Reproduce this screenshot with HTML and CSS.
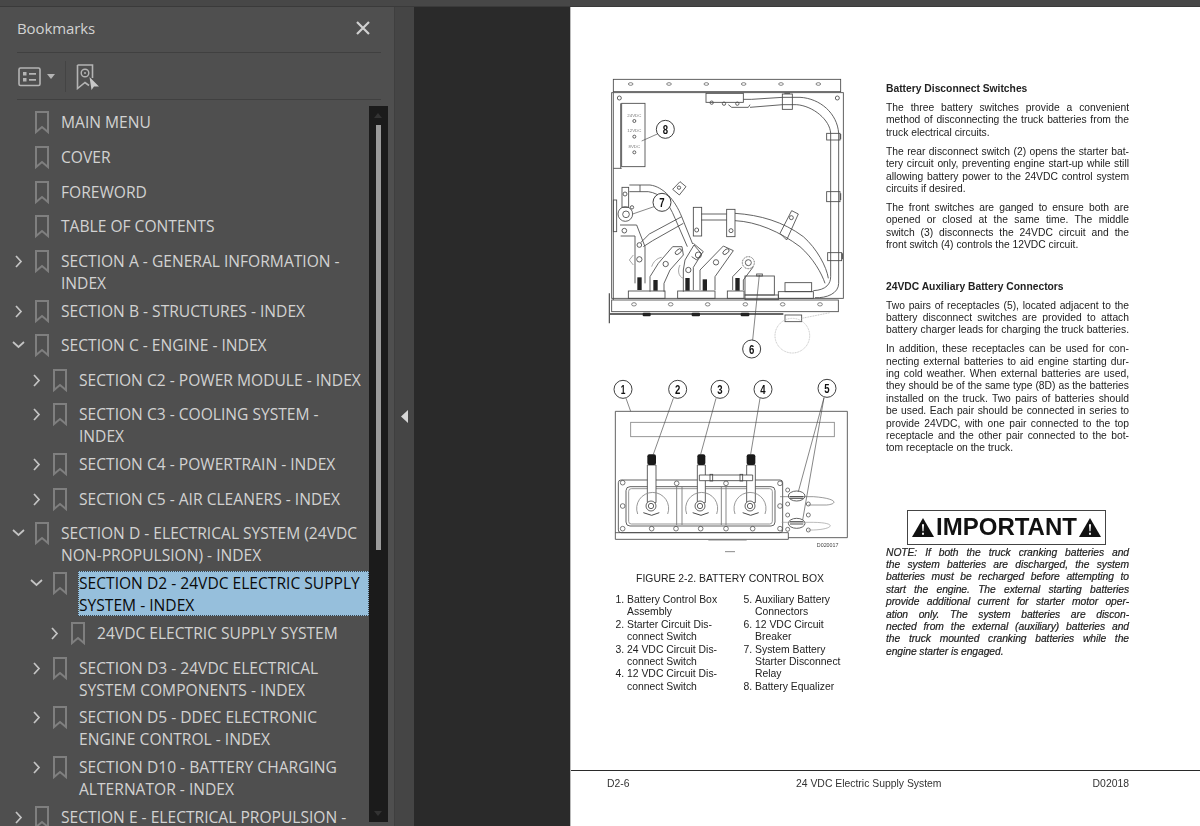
FILE: index.html
```html
<!DOCTYPE html>
<html lang="en">
<head>
<meta charset="utf-8">
<title>Bookmarks</title>
<link rel="stylesheet" href="styles.css">
</head>
<body>
<svg class="defs" width="0" height="0" aria-hidden="true"><defs>
<g id="bm"><path d="M1 1H13V21L7 16L1 21Z" fill="none" stroke="#7f7f7f" stroke-width="2"/></g>
<g id="cr"><path d="M1 1L6 6.5L1 12" fill="none" stroke="#c4c4c4" stroke-width="1.7"/></g>
<g id="cd"><path d="M1 1L6.5 6L12 1" fill="none" stroke="#c4c4c4" stroke-width="1.7"/></g>
</defs></svg>
<div class="app">
  <div class="topbar"></div>
  <div class="main">
    <aside class="panel">
      <header class="panel-head"><span class="panel-title">Bookmarks</span>
        <svg class="close" width="16" height="16" viewBox="0 0 16 16"><path d="M2 2L14 14M14 2L2 14" stroke="#d0d0d0" stroke-width="2.2" fill="none"/></svg>
      </header>
      <div class="tools">
        <svg class="tool-list" width="24" height="20" viewBox="0 0 24 20"><rect x="1" y="1" width="21" height="17.5" rx="1.5" fill="none" stroke="#b4b4b4" stroke-width="1.6"/><rect x="5" y="5" width="3.5" height="3.5" fill="#b4b4b4"/><rect x="5" y="11" width="3.5" height="3.5" fill="#b4b4b4"/><path d="M11 6.8H18M11 12.8H18" stroke="#b4b4b4" stroke-width="1.8"/></svg>
        <svg class="tool-caret" width="8" height="5" viewBox="0 0 8 5"><path d="M0 0H8L4 5Z" fill="#b4b4b4"/></svg>
        <span class="tool-sep"></span>
        <svg class="tool-find" width="24" height="26" viewBox="0 0 24 26"><path d="M1.5 1H16.5V14M1.5 1V24.5L9 18.5L13 21.5" fill="none" stroke="#b4b4b4" stroke-width="1.6"/><circle cx="9" cy="9" r="3.8" fill="none" stroke="#b4b4b4" stroke-width="1.4"/><circle cx="9" cy="9" r="1" fill="#b4b4b4"/><path d="M13.5 13L23 22.5H18L15.5 26Z" fill="#c8c8c8"/></svg>
      </div>
      <div class="tree-wrap">
        <ul class="tree">
          <li class="row l0"><span class="tw"></span><svg class="bm"><use href="#bm"/></svg><span class="lab">MAIN MENU</span></li>
          <li class="row l0"><span class="tw"></span><svg class="bm"><use href="#bm"/></svg><span class="lab">COVER</span></li>
          <li class="row l0"><span class="tw"></span><svg class="bm"><use href="#bm"/></svg><span class="lab">FOREWORD</span></li>
          <li class="row l0"><span class="tw"></span><svg class="bm"><use href="#bm"/></svg><span class="lab">TABLE OF CONTENTS</span></li>
          <li class="row l0 two"><svg class="tw"><use href="#cr"/></svg><svg class="bm"><use href="#bm"/></svg><span class="lab">SECTION A - GENERAL INFORMATION -<br>INDEX</span></li>
          <li class="row l0"><svg class="tw"><use href="#cr"/></svg><svg class="bm"><use href="#bm"/></svg><span class="lab">SECTION B - STRUCTURES - INDEX</span></li>
          <li class="row l0"><svg class="tw down"><use href="#cd"/></svg><svg class="bm"><use href="#bm"/></svg><span class="lab">SECTION C - ENGINE - INDEX</span></li>
          <li class="row l1"><svg class="tw"><use href="#cr"/></svg><svg class="bm"><use href="#bm"/></svg><span class="lab">SECTION C2 - POWER MODULE - INDEX</span></li>
          <li class="row l1 two"><svg class="tw"><use href="#cr"/></svg><svg class="bm"><use href="#bm"/></svg><span class="lab">SECTION C3 - COOLING SYSTEM -<br>INDEX</span></li>
          <li class="row l1"><svg class="tw"><use href="#cr"/></svg><svg class="bm"><use href="#bm"/></svg><span class="lab">SECTION C4 - POWERTRAIN - INDEX</span></li>
          <li class="row l1"><svg class="tw"><use href="#cr"/></svg><svg class="bm"><use href="#bm"/></svg><span class="lab">SECTION C5 - AIR CLEANERS - INDEX</span></li>
          <li class="row l0 two"><svg class="tw down"><use href="#cd"/></svg><svg class="bm"><use href="#bm"/></svg><span class="lab">SECTION D - ELECTRICAL SYSTEM (24VDC<br>NON-PROPULSION) - INDEX</span></li>
          <li class="row l1 two"><svg class="tw down"><use href="#cd"/></svg><svg class="bm"><use href="#bm"/></svg><span class="lab selected">SECTION D2 - 24VDC ELECTRIC SUPPLY<br>SYSTEM - INDEX</span></li>
          <li class="row l2"><svg class="tw"><use href="#cr"/></svg><svg class="bm"><use href="#bm"/></svg><span class="lab">24VDC ELECTRIC SUPPLY SYSTEM</span></li>
          <li class="row l1 two"><svg class="tw"><use href="#cr"/></svg><svg class="bm"><use href="#bm"/></svg><span class="lab">SECTION D3 - 24VDC ELECTRICAL<br>SYSTEM COMPONENTS - INDEX</span></li>
          <li class="row l1 two"><svg class="tw"><use href="#cr"/></svg><svg class="bm"><use href="#bm"/></svg><span class="lab">SECTION D5 - DDEC ELECTRONIC<br>ENGINE CONTROL - INDEX</span></li>
          <li class="row l1 two"><svg class="tw"><use href="#cr"/></svg><svg class="bm"><use href="#bm"/></svg><span class="lab">SECTION D10 - BATTERY CHARGING<br>ALTERNATOR - INDEX</span></li>
          <li class="row l0 two"><svg class="tw"><use href="#cr"/></svg><svg class="bm"><use href="#bm"/></svg><span class="lab">SECTION E - ELECTRICAL PROPULSION -</span></li>
        </ul>
        <div class="scrollbar"><span class="arrow up"></span><span class="thumb"></span><span class="arrow dn"></span></div>
      </div>
    </aside>
    <div class="handle-strip"><svg width="7" height="13" viewBox="0 0 7 13"><path d="M7 0V13L0 6.5Z" fill="#d6d6d6"/></svg></div>
    <div class="gutter"></div>
    <main class="page">
      <div class="columns">
        <section class="col-left">
          <svg class="fig" width="270" height="300" viewBox="0 0 810 900">
            <g fill="none" stroke="#4a4a4a" stroke-width="2.6">
              <rect x="40" y="28" width="682" height="37"/>
              <rect x="35" y="68" width="695" height="617"/>
              <path d="M40 68V690M62 100V295M40 295H65"/>
              <rect x="65" y="100" width="70" height="190"/>
              <circle cx="58" cy="84" r="6"/><circle cx="712" cy="84" r="6"/>
              <g stroke-width="2"><ellipse cx="92" cy="42" rx="7" ry="4"/><ellipse cx="207" cy="42" rx="7" ry="4"/><ellipse cx="319" cy="42" rx="7" ry="4"/><ellipse cx="431" cy="42" rx="7" ry="4"/><ellipse cx="543" cy="42" rx="7" ry="4"/><ellipse cx="655" cy="42" rx="7" ry="4"/>
              <ellipse cx="102" cy="703" rx="7" ry="5"/><ellipse cx="212" cy="703" rx="7" ry="5"/><ellipse cx="323" cy="703" rx="7" ry="5"/><ellipse cx="436" cy="703" rx="7" ry="5"/><ellipse cx="548" cy="703" rx="7" ry="5"/><ellipse cx="660" cy="703" rx="7" ry="5"/></g>
              <circle cx="103" cy="153" r="4.5"/><circle cx="103" cy="200" r="4.5"/><circle cx="103" cy="247" r="4.5"/>
              <path d="M172 192L125 213M162 410L98 432M458 810L478 615" stroke-width="2"/>
              <rect x="318" y="70" width="112" height="27"/>
              <circle cx="335" cy="98" r="5"/><circle cx="372" cy="101" r="5"/><circle cx="412" cy="101" r="5"/>
              <path d="M385 104L395 112H445L450 104"/>
              <path d="M430 88H455L548 82H600C660 85 712 130 716 190V640C716 670 680 685 645 683"/>
              <path d="M450 112L548 104H590C640 108 690 150 692 190V620C692 640 680 660 640 662"/>
              <rect x="547" y="72" width="30" height="46"/><rect x="680" y="190" width="40" height="20"/><rect x="680" y="365" width="40" height="30"/><rect x="683" y="548" width="42" height="24"/>
              <g stroke-width="3.2"><path d="M722 192V208M722 370V390M727 550V568M553 70H570"/></g>
              <rect x="40" y="390" width="10" height="95"/>
              <circle cx="76" cy="432" r="22"/><circle cx="78" cy="433" r="10"/>
              <rect x="66" y="352" width="20" height="60"/>
              <circle cx="75" cy="372" r="6"/><circle cx="96" cy="412" r="5"/><circle cx="73" cy="482" r="7"/>
              <path d="M60 465H110L135 530V640M62 498H105V640"/>
              <circle cx="118" cy="568" r="8"/><circle cx="118" cy="525" r="7"/>
              <path d="M88 345H150C190 350 225 390 245 440L278 522M88 365H145C180 370 205 395 225 445L262 530"/>
              <path d="M120 345V365"/>
              <path d="M218 358L240 335L258 350L238 375Z"/><circle cx="237" cy="353" r="5"/>
              <path d="M148 492L245 440M158 512L250 460M122 518L148 492M130 530L158 512"/>
              <circle cx="295" cy="555" r="9"/><path d="M280 520L310 545L290 570L275 560"/>
              <path d="M150 665V620L175 580L218 530H246L250 555L210 600L192 640V665"/>
              <ellipse cx="235" cy="545" rx="11" ry="6" transform="rotate(-40 235 545)"/><circle cx="197" cy="582" r="8"/>
              <path d="M250 665V600L255 570L282 525L305 552L280 592V660"/><circle cx="265" cy="600" r="8"/>
              <path d="M300 660V600L370 528L400 542L345 620V660"/><ellipse cx="378" cy="545" rx="11" ry="6" transform="rotate(-40 378 545)"/><circle cx="348" cy="577" r="8"/>
              <path d="M398 660V620L425 592M460 590L430 630V660"/>
              <circle cx="445" cy="578" r="18" stroke-dasharray="3 2"/><circle cx="445" cy="578" r="9"/>
              <path d="M100 555L88 570L100 585M185 562C170 565 160 575 155 590M240 585C232 600 235 620 250 625" stroke="#999"/>
              <rect x="85" y="663" width="110" height="22"/><rect x="233" y="663" width="112" height="22"/><rect x="382" y="663" width="50" height="22"/>
              <rect x="435" y="618" width="88" height="57"/><rect x="470" y="612" width="17" height="6"/><rect x="435" y="675" width="100" height="14"/>
              <rect x="555" y="638" width="80" height="27"/><rect x="535" y="665" width="105" height="20"/>
              <path d="M304 432H380M304 450H380"/>
              <rect x="280" y="412" width="25" height="86"/><rect x="380" y="418" width="25" height="82"/>
              <circle cx="290" cy="480" r="6"/><circle cx="393" cy="482" r="6"/>
              <path d="M405 430C480 435 550 455 610 500C650 535 680 590 685 625M405 452C470 455 540 485 600 530C640 565 665 610 675 640"/>
              <path d="M540 490L575 422L595 432L560 510Z"/><circle cx="574" cy="443" r="6"/>
              <rect x="35" y="690" width="680" height="35"/>
              <path d="M28 670V760" stroke-width="3.5"/><path d="M30 732H550" stroke-width="5" stroke="#333"/>
              <rect x="555" y="735" width="50" height="20"/>
              <circle cx="577" cy="797" r="52" stroke="#bbb" stroke-dasharray="3 2"/><path d="M605 745L690 728" stroke="#bbb" stroke-dasharray="3 2"/>
            </g>
            <g fill="#222"><rect x="128" y="728" width="24" height="11" rx="3"/><rect x="275" y="728" width="25" height="11" rx="3"/><rect x="422" y="728" width="26" height="11" rx="3"/>
              <rect x="112" y="622" width="13" height="38"/><rect x="160" y="630" width="13" height="32"/><rect x="256" y="624" width="13" height="38"/><rect x="308" y="628" width="13" height="34"/><rect x="406" y="624" width="13" height="38"/></g>
            <g class="tiny"><text x="103" y="141">24VDC</text><text x="103" y="187">12VDC</text><text x="103" y="235">8VDC</text></g>
            <g class="call"><circle cx="196" cy="178" r="27"/><text x="196" y="192" textLength="16" lengthAdjust="spacingAndGlyphs">8</text><circle cx="186" cy="397" r="27"/><text x="186" y="411" textLength="16" lengthAdjust="spacingAndGlyphs">7</text><circle cx="455" cy="837" r="27"/><text x="455" y="851" textLength="16" lengthAdjust="spacingAndGlyphs">6</text></g>
          </svg>
          <svg class="fig" width="270" height="200" viewBox="0 0 810 600">
            <g fill="none" stroke="#4a4a4a" stroke-width="2.6">
              <path d="M46 124H742V503H565M46 124V508H565V488H46"/>
              <rect x="92" y="157" width="611" height="43" stroke="#888"/>
              <path d="M78 85L92 124M220 85L160 253M348 85L302 253M480 85L452 253M672 83L595 365M672 83L608 450" stroke-width="2"/>
              <rect x="55" y="330" width="493" height="158" rx="8"/>
              <rect x="78" y="350" width="447" height="118" rx="12"/>
              <rect x="86" y="356" width="431" height="106" rx="8" stroke="#888"/>
              <path d="M230 350V465M246 350V465M364 350V465M378 350V465" stroke="#777"/>
              <path d="M142 285H168V398H142ZM292 285H316V398H292ZM440 285H466V398H440Z" fill="#fff"/>
              <path d="M298 315H458V332H298Z" fill="#fff"/>
              <rect x="330" y="313" width="8" height="20"/><rect x="420" y="313" width="8" height="20"/>
              <path d="M113 432A48 48 0 1 1 203 432M260 432A48 48 0 1 1 350 432M405 432A48 48 0 1 1 495 432" stroke="#888"/>
              <path d="M130 428L155 436L178 428M278 428L303 436L326 428M428 428L452 436L476 428" stroke-width="3"/>
              <g fill="#fff"><circle cx="153" cy="408" r="15"/><circle cx="300" cy="408" r="15"/><circle cx="450" cy="408" r="15"/></g>
              <circle cx="153" cy="408" r="8"/><circle cx="300" cy="408" r="8"/><circle cx="450" cy="408" r="8"/>
              <g stroke-width="2.2"><circle cx="68" cy="338" r="7"/><circle cx="68" cy="408" r="7"/><circle cx="68" cy="476" r="7"/><circle cx="230" cy="340" r="7"/><circle cx="378" cy="340" r="7"/><circle cx="540" cy="340" r="7"/><circle cx="540" cy="408" r="7"/><circle cx="540" cy="476" r="7"/><circle cx="155" cy="476" r="7"/><circle cx="228" cy="476" r="7"/><circle cx="302" cy="476" r="7"/><circle cx="378" cy="476" r="7"/><circle cx="458" cy="476" r="7"/><circle cx="563" cy="360" r="6"/><circle cx="563" cy="402" r="6"/><circle cx="625" cy="402" r="6"/><circle cx="563" cy="435" r="6"/><circle cx="563" cy="478" r="6"/><circle cx="625" cy="435" r="6"/><circle cx="625" cy="480" r="6"/></g>
              <ellipse cx="590" cy="378" rx="25" ry="15"/><ellipse cx="590" cy="460" rx="25" ry="15"/>
              <path d="M540 380H640C712 385 715 402 680 405H625" stroke="#666" stroke-width="2"/>
              <path d="M545 457H640C715 458 700 478 640 480H625" stroke="#999" stroke-width="2"/>
              <path d="M570 380H610M570 385H610M570 455H610M570 462H610" stroke="#333"/>
              <path d="M325 510H440M375 545H405" stroke="#777"/>
            </g>
            <g fill="#1a1a1a"><rect x="142" y="253" width="26" height="32" rx="6"/><rect x="292" y="253" width="24" height="32" rx="6"/><rect x="440" y="253" width="26" height="32" rx="6"/></g>
            <g class="call"><circle cx="69" cy="58" r="27"/><text x="69" y="72" textLength="14" lengthAdjust="spacingAndGlyphs">1</text><circle cx="233" cy="58" r="27"/><text x="233" y="72" textLength="16" lengthAdjust="spacingAndGlyphs">2</text><circle cx="360" cy="58" r="27"/><text x="360" y="72" textLength="16" lengthAdjust="spacingAndGlyphs">3</text><circle cx="489" cy="58" r="27"/><text x="489" y="72" textLength="16" lengthAdjust="spacingAndGlyphs">4</text><circle cx="681" cy="55" r="27"/><text x="681" y="69" textLength="16" lengthAdjust="spacingAndGlyphs">5</text></g>
            <text class="figno" x="683" y="532">D020017</text>
          </svg>
          <p class="caption">FIGURE 2-2. BATTERY CONTROL BOX</p>
          <div class="legend">
            <ol class="leg-col">
              <li>Battery Control Box<br>Assembly</li>
              <li>Starter Circuit Dis-<br>connect Switch</li>
              <li>24 VDC Circuit Dis-<br>connect Switch</li>
              <li>12 VDC Circuit Dis-<br>connect Switch</li>
            </ol>
            <ol class="leg-col" start="5">
              <li>Auxiliary Battery<br>Connectors</li>
              <li>12 VDC Circuit<br>Breaker</li>
              <li>System Battery<br>Starter Disconnect<br>Relay</li>
              <li>Battery Equalizer</li>
            </ol>
          </div>
        </section>
        <section class="col-right">
          <h3>Battery Disconnect Switches</h3>
          <p><span class="j">The three battery switches provide a convenient</span><span class="j">method of disconnecting the truck batteries from the</span><span>truck electrical circuits.</span></p>
          <p><span class="j">The rear disconnect switch (2) opens the starter bat-</span><span class="j">tery circuit only, preventing engine start-up while still</span><span class="j">allowing battery power to the 24VDC control system</span><span>circuits if desired.</span></p>
          <p><span class="j">The front switches are ganged to ensure both are</span><span class="j">opened or closed at the same time. The middle</span><span class="j">switch (3) disconnects the 24VDC circuit and the</span><span>front switch (4) controls the 12VDC circuit.</span></p>
          <h3 class="h-second">24VDC Auxiliary Battery Connectors</h3>
          <p><span class="j">Two pairs of receptacles (5), located adjacent to the</span><span class="j">battery disconnect switches are provided to attach</span><span class="j">battery charger leads for charging the truck batteries.</span></p>
          <p><span class="j">In addition, these receptacles can be used for con-</span><span class="j">necting external batteries to aid engine starting dur-</span><span class="j">ing cold weather. When external batteries are used,</span><span class="j">they should be of the same type (8D) as the batteries</span><span class="j">installed on the truck. Two pairs of batteries should</span><span class="j">be used. Each pair should be connected in series to</span><span class="j">provide 24VDC, with one pair connected to the top</span><span class="j">receptacle and the other pair connected to the bot-</span><span>tom receptacle on the truck.</span></p>
          <div class="important"><svg width="22" height="19" viewBox="0 0 21 18"><path d="M10.5 0L21 18H0Z" fill="#111"/><path d="M9.5 6H11.5L11 12.5H10ZM9.6 14H11.4V16H9.6Z" fill="#fff"/></svg><span>IMPORTANT</span><svg width="22" height="19" viewBox="0 0 21 18"><path d="M10.5 0L21 18H0Z" fill="#111"/><path d="M9.5 6H11.5L11 12.5H10ZM9.6 14H11.4V16H9.6Z" fill="#fff"/></svg></div>
          <p class="note"><span class="j">NOTE: If both the truck cranking batteries and</span><span class="j">the system batteries are discharged, the system</span><span class="j">batteries must be recharged before attempting to</span><span class="j">start the engine. The external starting batteries</span><span class="j">provide additional current for starter motor oper-</span><span class="j">ation only. The system batteries are discon-</span><span class="j">nected from the external (auxiliary) batteries and</span><span class="j">the truck mounted cranking batteries while the</span><span>engine starter is engaged.</span></p>
        </section>
      </div>
      <footer class="foot"><span>D2-6</span><span>24 VDC Electric Supply System</span><span>D02018</span></footer>
    </main>
  </div>
</div>
</body>
</html>
```
FILE: styles.css
```css
*{box-sizing:border-box}
html,body{margin:0;height:100%;overflow:hidden}
.defs{position:absolute}
.app{width:1200px;height:826px;display:flex;flex-direction:column;background:#2a2a2a;overflow:hidden}
.topbar{height:7px;flex:none;background:#474747;border-bottom:1px solid #3a3a3a}
.main{flex:1;display:flex;min-height:0}
.panel{width:394px;flex:none;background:#4f4f4f;display:flex;flex-direction:column;font-family:"Open Sans","Noto Sans",sans-serif;color:#d2d2d2;overflow:hidden}
.panel-head{height:46px;margin:0 13px 0 17px;display:flex;align-items:center;justify-content:space-between;border-bottom:1px solid #404040;padding:0 10px 3px 0}
.panel-title{font-size:15px;color:#d2d2d2;letter-spacing:-.1px}
.tools{height:47px;margin:0 13px 0 17px;display:flex;align-items:center;border-bottom:1px solid #404040;padding:1px 0 0 1px}
.tool-caret{margin:0 0 0 5px}
.tool-sep{width:1px;height:31px;background:#444;margin:0 10px 0 10px}
.tree-wrap{flex:1;display:flex;min-height:0;padding-top:6px}
.tree{list-style:none;margin:0;padding:0;width:369px;flex:none}
.row{height:34.6px;padding-top:5.4px;display:flex;align-items:flex-start;font-size:15.6px;line-height:22px;white-space:nowrap}
.row.two{height:49.8px}
.l0{padding-left:15px}
.l1{padding-left:33px}
.l2{padding-left:51px}
.tw{width:7px;height:13px;flex:none;margin-top:5px;overflow:visible}
span.tw{display:block}
.tw.down{width:13px;margin-left:-3px;margin-top:7px;margin-right:-3px}
.bm{width:14px;height:22px;flex:none;margin:0 0 0 13px;overflow:visible}
.lab{margin-left:12px;flex:1}
.lab.selected{background:#96bfdc;color:#0a0a0a;outline:1px dotted #3a4650;outline-offset:-1px;margin:-1px 0 0 11px;padding:1px 0 0 1px;height:45px}
.scrollbar{width:18.5px;flex:none;height:716px;background:#1b1b1b;position:relative}
.thumb{position:absolute;left:7px;top:19px;width:5px;height:425px;background:#9a9a9a}
.arrow{position:absolute;left:5px;width:0;height:0;border-left:4px solid transparent;border-right:4px solid transparent}
.arrow.up{top:7px;border-bottom:5px solid #333}
.arrow.dn{bottom:6px;border-top:5px solid #333}
.handle-strip{width:20px;flex:none;background:#454545;border-left:1px solid #3f3f3f;display:flex;align-items:center;justify-content:center}
.gutter{width:156px;flex:none;background:#2a2a2a}
.page{flex:1;background:#fff;border-left:1px solid #bbb;position:relative;font-family:"Liberation Sans",Arial,sans-serif;color:#222;display:flex;flex-direction:column}
.columns{display:flex;height:763px;flex:none;filter:blur(.3px)}
.col-left{width:315px;flex:none;padding:63px 0 0 29px;display:flex;flex-direction:column}
.fig{display:block;flex:none}
.call circle{fill:#fff;stroke:#222;stroke-width:2.6}
.call text{font:700 40px "Liberation Sans",sans-serif;text-anchor:middle;fill:#111}
.tiny text{font:13px "Liberation Sans",sans-serif;text-anchor:middle;fill:#777}
.figno{font:16px "Liberation Sans",sans-serif;fill:#444;text-anchor:middle}
.caption{font-size:10.4px;line-height:12px;margin:3px 0 0;text-align:center;width:260px}
.legend{display:flex;margin:9px 0 0 14px;font-size:10.4px;line-height:12.37px}
.leg-col{margin:0;padding:0 0 0 13px;width:128px}
.col-right{width:243px;flex:none;padding-top:76px;font-size:10.3px;line-height:12.37px}
.col-right h3{font-size:10.3px;line-height:12px;margin:0 0 7px;font-weight:700}
.col-right p{margin:0 0 6.7px}
.col-right p span{display:block;white-space:nowrap}
.col-right p span.j{text-align:justify;text-align-last:justify;white-space:normal}
.col-right .h-second{margin-top:29px}
.important{margin:55px 0 0 21px;width:199px;height:35px;border:1.5px solid #444;display:flex;align-items:center;justify-content:center;gap:2px;font-weight:700;font-size:24px;color:#111}
.col-right .note{font-style:italic;letter-spacing:-.06px;-webkit-text-stroke:.2px #222;margin-top:2px}
.foot{position:absolute;left:0;right:0;top:763px;border-top:1.3px solid #2a2a2a;padding:6.5px 71px 0 36px;display:grid;grid-template-columns:189px 1fr auto;font-size:10.4px;color:#333;filter:blur(.3px)}
```
